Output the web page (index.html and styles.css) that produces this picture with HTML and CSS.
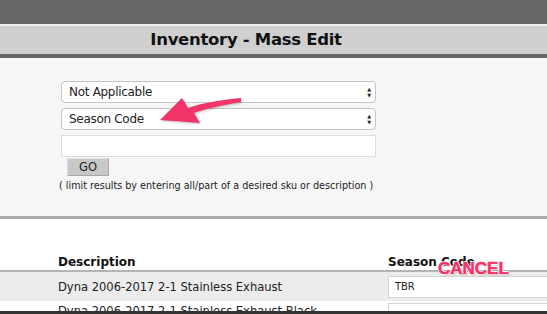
FILE: index.html
```html
<!DOCTYPE html>
<html lang="en">
<head>
  <meta charset="UTF-8" />
  <title>Inventory - Mass Edit</title>
  <link rel="stylesheet" href="styles.css">
</head>
<body>
  <div class="top-band"></div>
  <header class="title-bar">Inventory - Mass Edit</header>

  <section class="search">
    <div class="select-wrap">
      <select class="select"><option>Not Applicable</option></select>
      <span class="select-arrows">&#9650;<br>&#9660;</span>
    </div>
    <div class="select-wrap">
      <select class="select"><option>Season Code</option></select>
      <span class="select-arrows">&#9650;<br>&#9660;</span>
    </div>
    <input type="text" class="search-input" />
    <button class="go-btn">GO</button>
    <p class="hint">( limit results by entering all/part of a desired sku or description )</p>
  </section>

  <section class="results">
    <div class="row head">
      <div>Description</div>
      <div>Season Code</div>
    </div>
    <div class="row item shaded">
      <div class="desc">Dyna 2006-2017 2-1 Stainless Exhaust</div>
      <div><input type="text" class="code-input" value="TBR" /></div>
    </div>
    <div class="row item cut">
      <div class="desc">Dyna 2006-2017 2-1 Stainless Exhaust Black</div>
      <div><input type="text" class="code-input" value="" /></div>
    </div>
  </section>
  <div class="bottom-bar"></div>

  <!-- annotation overlays -->
  <svg class="arrow" width="90" height="40" viewBox="0 0 90 40">
    <path d="M81 10 C 62 13, 45 17, 34 21 L 40 31 L 0 28 L 22 6 L 28 16 C 42 11, 60 8, 81 6 Z" fill="#f2346a" />
  </svg>
  <span class="cancel">CANCEL</span>
</body>
</html>
```

FILE: styles.css
```css
body {
  margin: 0;
  font-family: "DejaVu Sans", Verdana, sans-serif;
  color: #222;
  background-color: #fff;
  overflow: hidden;
  position: relative;
}
.top-band {
  height: 24px;
  background-color: #676767;
}
.title-bar {
  height: 28px;
  line-height: 28px;
  border-top: 2px solid #eeeeee;
  border-bottom: 4px solid #676767;
  background-color: #cfcfcf;
  text-align: center;
  font-weight: bold;
  font-size: 16.5px;
  color: #111;
  letter-spacing: -0.3px;
  padding-right: 55px;
}
.search {
  background-color: #f6f6f6;
  padding: 23px 0 0 61px;
  height: 135px;
  border-bottom: 3px solid #ababab;
}
.select-wrap {
  position: relative;
  width: 315px;
  margin-bottom: 5px;
}
.select {
  appearance: none;
  -webkit-appearance: none;
  width: 315px;
  height: 22px;
  border: 1px solid #c4c4c4;
  border-radius: 4px;
  background-color: #fff;
  font-family: "DejaVu Sans", sans-serif;
  font-size: 12px;
  letter-spacing: -0.3px;
  color: #222;
  padding: 0 7px;
}
.select-arrows {
  position: absolute;
  right: 5px;
  top: 5px;
  font-size: 5px;
  line-height: 6px;
  color: #222;
}
.search-input {
  display: block;
  width: 315px;
  height: 22px;
  box-sizing: border-box;
  border: 1px solid #dcdcdc;
  background-color: #fff;
  margin: 0;
}
.go-btn {
  display: block;
  margin: 1px 0 0 6px;
  width: 42px;
  height: 18px;
  padding: 0;
  border: 1px solid #a8a8a8;
  border-top-color: #e0e0e0;
  border-left-color: #e0e0e0;
  background-color: #c8c8c8;
  font-family: "DejaVu Sans", sans-serif;
  font-size: 11.5px;
  color: #222;
}
.hint {
  margin: 3px 0 0 -2px;
  font-family: "DejaVu Sans Condensed", "DejaVu Sans", sans-serif;
  font-size: 10.7px;
  color: #222;
}
.results {
  background-color: #fff;
}
.row {
  display: grid;
  grid-template-columns: 330px 1fr;
  padding-left: 58px;
}
.head {
  height: 53px;
  align-items: end;
  font-weight: bold;
  font-size: 12px;
  color: #111;
  border-bottom: 2px solid #b4b4b4;
  box-sizing: border-box;
  padding-bottom: 1px;
}
.item {
  height: 29px;
  align-items: center;
  font-size: 12.8px;
  font-family: "DejaVu Sans Condensed", "DejaVu Sans", sans-serif;
}
.shaded {
  background-color: #ececec;
}
.cut {
  height: 10px;
  overflow: hidden;
  align-items: start;
}
.cut .desc {
  margin-top: 2px;
}
.cut .code-input {
  margin-top: 2px;
}
.code-input {
  width: 170px;
  height: 22px;
  box-sizing: border-box;
  border: 1px solid #d4d4d4;
  background-color: #fff;
  font-family: "DejaVu Sans Condensed", "DejaVu Sans", sans-serif;
  font-size: 11px;
  padding: 0 6px;
  color: #222;
}
.bottom-bar {
  height: 6px;
  background-color: #333;
}
.arrow {
  position: absolute;
  left: 160px;
  top: 92px;
  filter: drop-shadow(1px 1px 1px rgba(0, 0, 0, 0.25));
}
.cancel {
  position: absolute;
  left: 438px;
  top: 259px;
  font-family: "Liberation Sans", Arial, sans-serif;
  font-weight: bold;
  font-size: 17px;
  color: #f2346a;
  -webkit-text-stroke: 0.5px #f2346a;
  text-shadow: 1px 0 0 #fff, -1px 0 0 #fff, 0 1px 0 #fff, 0 -1px 0 #fff, 1px 1px 2px rgba(0, 0, 0, 0.35);
}
```
